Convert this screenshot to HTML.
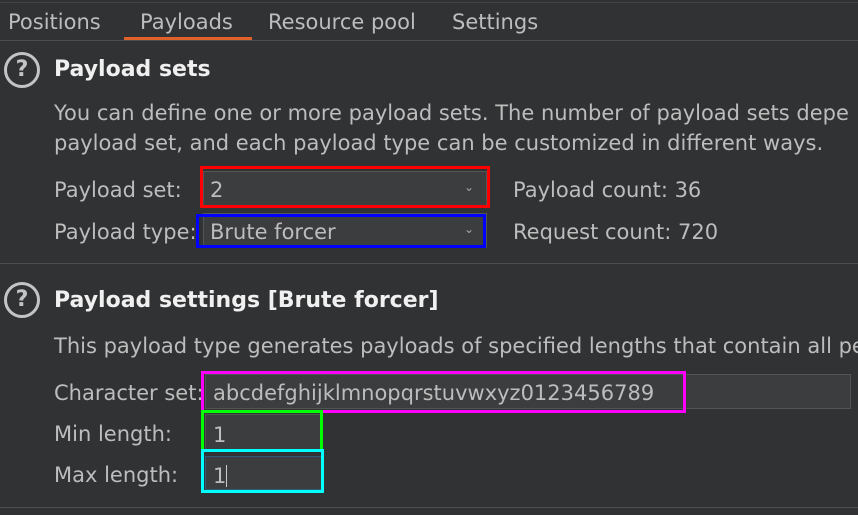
<!DOCTYPE html>
<html><head><style>
body{margin:0;width:858px;height:515px;background:#313234;overflow:hidden;position:relative;font-family:"DejaVu Sans","Liberation Sans",sans-serif;color:#bdbdbd;font-size:21px}
.a{position:absolute;white-space:nowrap;line-height:1}
.hr{position:absolute;left:0;width:858px;height:1px;background:#4d4e50}
.t{font-weight:bold;color:#f0f0f0;font-size:22px}
.q{position:absolute;width:30px;height:30px;border:3px solid #c4c4c4;border-radius:50%;color:#c4c4c4;font-weight:bold;font-size:22px;text-align:center;line-height:30px}
.f{position:absolute;background:#3c3d3f;border:1px solid #535456;box-sizing:border-box;overflow:hidden}
.b{position:absolute;box-sizing:border-box;border:3px solid}
.chev{position:absolute;right:12px;top:8px;color:#a8a8a8;font-size:12px}
.clip{position:absolute;left:0;top:0;width:858px;height:515px;overflow:hidden}
</style></head><body><div class="clip">
<div class="hr" style="top:2px;background:#444"></div>
<div class="a" style="left:8px;top:12px">Positions</div>
<div class="a" style="left:140px;top:12px">Payloads</div>
<div class="a" style="left:268px;top:12px">Resource pool</div>
<div class="a" style="left:452px;top:12px">Settings</div>
<div class="hr" style="top:40px"></div>
<div style="position:absolute;left:124px;top:37px;width:128px;height:3px;background:#e0622a"></div>

<div class="q" style="left:4px;top:52px">?</div>
<div class="a t" style="left:54px;top:59px">Payload sets</div>
<div class="a" style="left:54px;top:103px">You can define one or more payload sets. The number of payload sets depe</div>
<div class="a" style="left:54px;top:133px">payload set, and each payload type can be customized in different ways.</div>

<div class="a" style="left:54px;top:180px">Payload set:</div>
<div class="f" style="left:203px;top:171px;width:284px;height:35px"><span class="a" style="left:6px;top:8px">2</span><span class="chev">&#8964;</span></div>
<div class="b" style="left:200px;top:166px;width:290px;height:42px;border-color:#ff0000"></div>
<div class="a" style="left:513px;top:180px">Payload count: 36</div>

<div class="a" style="left:54px;top:222px">Payload type:</div>
<div class="f" style="left:203px;top:213px;width:284px;height:35px"><span class="a" style="left:6px;top:8px">Brute forcer</span><span class="chev">&#8964;</span></div>
<div class="b" style="left:196px;top:214px;width:290px;height:34px;border-color:#0000ff"></div>
<div class="a" style="left:513px;top:222px">Request count: 720</div>

<div class="hr" style="top:263px"></div>

<div class="q" style="left:4px;top:282px">?</div>
<div class="a t" style="left:54px;top:290px">Payload settings [Brute forcer]</div>
<div class="a" style="left:54px;top:336px">This payload type generates payloads of specified lengths that contain all pe</div>

<div class="a" style="left:54px;top:383px">Character set:</div>
<div class="f" style="left:205px;top:374px;width:646px;height:35px"><span class="a" style="left:7px;top:8px">abcdefghijklmnopqrstuvwxyz0123456789</span></div>
<div class="b" style="left:201px;top:371px;width:485px;height:42px;border-color:#ff00ff"></div>

<div class="a" style="left:54px;top:424px">Min length:</div>
<div class="f" style="left:205px;top:414px;width:117px;height:36px"><span class="a" style="left:7px;top:10px">1</span></div>
<div class="b" style="left:201px;top:410px;width:122px;height:42px;border-color:#00ff00"></div>

<div class="a" style="left:54px;top:465px">Max length:</div>
<div class="f" style="left:205px;top:456px;width:117px;height:34px;border-color:#2f5a7a"><span class="a" style="left:7px;top:8px">1<span style="display:inline-block;width:1px;height:22px;background:#ccc;vertical-align:-4px"></span></span></div>
<div class="b" style="left:201px;top:449px;width:123px;height:44px;border-color:#00ffff"></div>

<div class="hr" style="top:507px"></div>
</div></body></html>
